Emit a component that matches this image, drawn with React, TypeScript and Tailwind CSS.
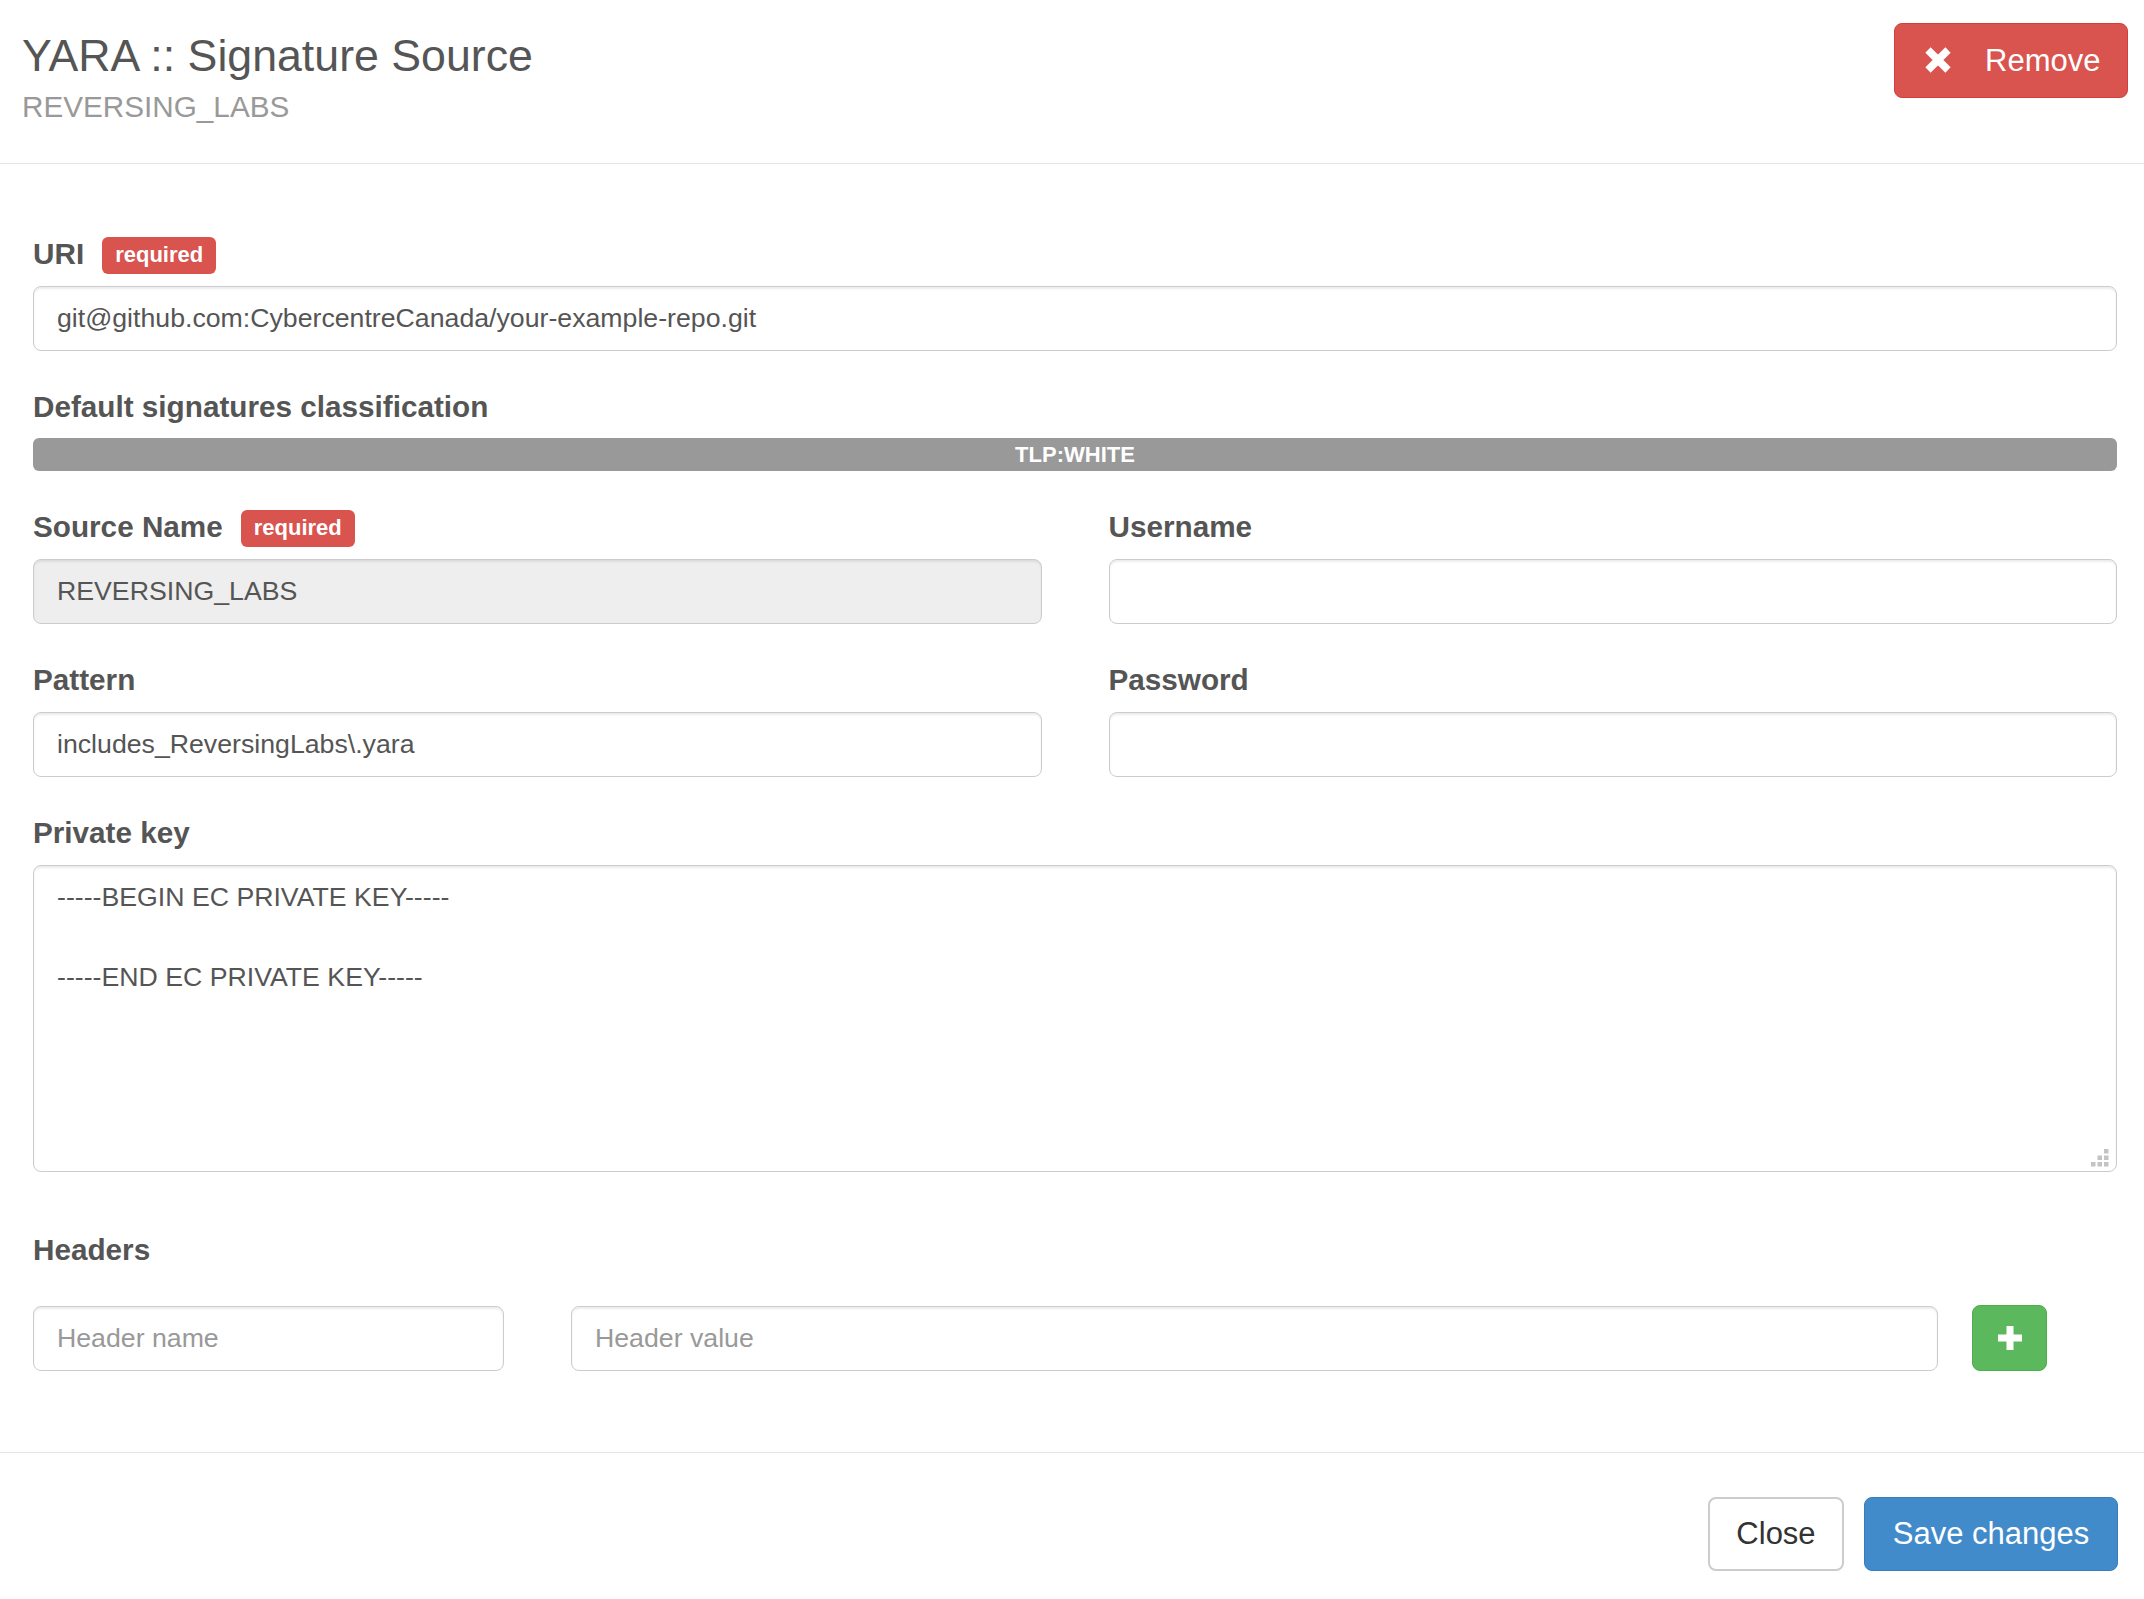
import React from "react";

const font = "font-['Liberation_Sans',Arial,sans-serif]";

function Label({ children, required }: { children: React.ReactNode; required?: boolean }) {
  return (
    <div className="flex h-[42px] items-center">
      <span className="relative -top-[1px] text-[29.7px] font-bold leading-[42px] text-[#555]">{children}</span>
      {required && (
        <span className="ml-[18px] flex h-[37px] items-center rounded-[6px] bg-[#d9534f] px-[13px] text-[22px] font-bold leading-none text-white">
          required
        </span>
      )}
    </div>
  );
}

const inputCls =
  "block h-[65px] w-full rounded-[8px] border border-[#ccc] px-[23px] text-[26.7px] text-[#555] shadow-[inset_0_2px_2px_rgba(0,0,0,0.075)] outline-none placeholder:text-[#999] " +
  font;

export default function App() {
  return (
    <div className={`h-[1599px] w-[2144px] overflow-hidden bg-white ${font}`}>
      {/* Header */}
      <div className="flex h-[164px] items-start justify-between border-b border-[#e5e5e5] pl-[22px] pr-[16px]">
        <div className="pt-[32px]">
          <div className="text-[44.7px] leading-[48px] text-[#555]">YARA :: Signature Source</div>
          <div className="mt-[6px] text-[29.7px] leading-[42px] text-[#999]">REVERSING_LABS</div>
        </div>
        <button className="mt-[23px] flex h-[75px] w-[234px] items-center gap-[33px] rounded-[8px] border border-[#d43f3a] bg-[#d9534f] pb-[1px] pl-[29px] text-[31px] text-white">
          <svg width="28" height="28" viewBox="0 0 28 28">
            <path d="M4 4 L24 24 M24 4 L4 24" stroke="#fff" strokeWidth="7.5" />
          </svg>
          <span className="relative top-[1px]">Remove</span>
        </button>
      </div>

      {/* Body */}
      <div className="flex h-[1288px] flex-col pl-[33px] pr-[27px] pt-[70px]">
        <Label required>URI</Label>
        <input
          className={`mt-[10px] ${inputCls}`}
          readOnly
          value="git@github.com:CybercentreCanada/your-example-repo.git"
        />

        <div className="mt-[36px]">
          <Label>Default signatures classification</Label>
        </div>
        <div className="mt-[9px] flex h-[33px] items-center justify-center rounded-[6px] bg-[#999] text-[22px] font-bold text-white">
          TLP:WHITE
        </div>

        <div className="mt-[36px] grid grid-cols-2 gap-x-[67px]">
          <div>
            <Label required>Source Name</Label>
            <input className={`mt-[10px] bg-[#eee] ${inputCls}`} readOnly value="REVERSING_LABS" />
            <div className="mt-[36px]">
              <Label>Pattern</Label>
            </div>
            <input className={`mt-[10px] ${inputCls}`} readOnly value="includes_ReversingLabs\.yara" />
          </div>
          <div>
            <Label>Username</Label>
            <input className={`mt-[10px] ${inputCls}`} readOnly value="" />
            <div className="mt-[36px]">
              <Label>Password</Label>
            </div>
            <input className={`mt-[10px] ${inputCls}`} type="password" readOnly value="" />
          </div>
        </div>

        <div className="mt-[36px]">
          <Label>Private key</Label>
        </div>
        <div className="relative mt-[10px]">
          <textarea
            className={`block h-[307px] w-full resize-none rounded-[8px] border border-[#ccc] px-[23px] py-[11px] text-[26.7px] leading-[40px] text-[#555] shadow-[inset_0_2px_2px_rgba(0,0,0,0.075)] outline-none ${font}`}
            readOnly
            value={"-----BEGIN EC PRIVATE KEY-----\n\n-----END EC PRIVATE KEY-----"}
          />
          <svg
            className="pointer-events-none absolute bottom-[5px] right-[8px]"
            width="18"
            height="18"
            viewBox="0 0 18 18"
          >
            <g fill="#c4c4c4">
              <rect x="0" y="13" width="4.5" height="4.5" />
              <rect x="6.5" y="13" width="4.5" height="4.5" />
              <rect x="13" y="13" width="4.5" height="4.5" />
              <rect x="6.5" y="6.5" width="4.5" height="4.5" />
              <rect x="13" y="6.5" width="4.5" height="4.5" />
              <rect x="13" y="0" width="4.5" height="4.5" />
            </g>
          </svg>
        </div>

        <div className="mt-[58px]">
          <Label>Headers</Label>
        </div>
        <div className="mt-[33px] flex items-center">
          <input className={`!w-[471px] ${inputCls}`} placeholder="Header name" />
          <input className={`ml-[67px] !w-[1367px] ${inputCls}`} placeholder="Header value" />
          <button className="ml-[34px] flex h-[66px] w-[75px] items-center justify-center rounded-[8px] border border-[#4cae4c] bg-[#5cb85c]">
            <svg width="26" height="26" viewBox="0 0 26 26">
              <path d="M13 1 V25 M1 13 H25" stroke="#fff" strokeWidth="7" />
            </svg>
          </button>
        </div>
      </div>

      {/* Footer */}
      <div className="flex justify-end gap-[20px] border-t border-[#e5e5e5] pr-[26px] pt-[44px]">
        <button className="h-[74px] w-[136px] rounded-[8px] border-2 border-[#ccc] bg-white text-[31px] text-[#333]">
          Close
        </button>
        <button className="h-[74px] w-[254px] rounded-[8px] border border-[#357ebd] bg-[#428bca] text-[31px] text-white">
          Save changes
        </button>
      </div>
    </div>
  );
}
